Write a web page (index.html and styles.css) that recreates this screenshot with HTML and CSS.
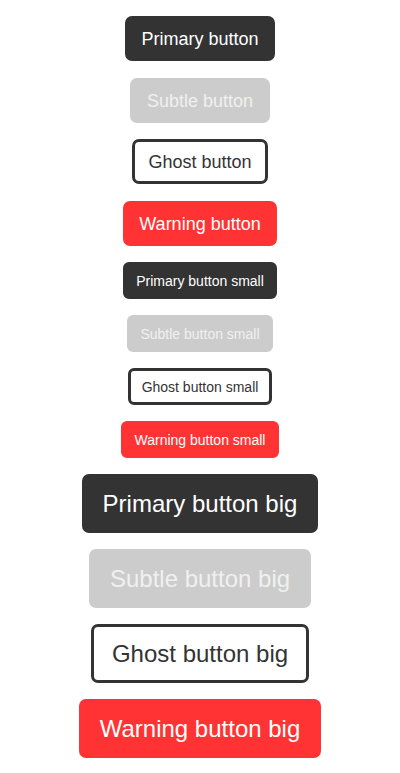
FILE: index.html
```html
<!DOCTYPE html>
<html lang="en">
<head>
<meta charset="utf-8">
<title>Buttons</title>
<link rel="stylesheet" href="styles.css">
</head>
<body>
<main class="stack">
  <button class="btn btn-primary">Primary button</button>
  <button class="btn btn-subtle">Subtle button</button>
  <button class="btn btn-ghost">Ghost button</button>
  <button class="btn btn-warning">Warning button</button>
  <button class="btn btn-small btn-primary">Primary button small</button>
  <button class="btn btn-small btn-subtle">Subtle button small</button>
  <button class="btn btn-small btn-ghost">Ghost button small</button>
  <button class="btn btn-small btn-warning">Warning button small</button>
  <button class="btn btn-big btn-primary">Primary button big</button>
  <button class="btn btn-big btn-subtle">Subtle button big</button>
  <button class="btn btn-big btn-ghost">Ghost button big</button>
  <button class="btn btn-big btn-warning">Warning button big</button>
</main>
</body>
</html>
```
FILE: styles.css
```css
html, body {
  margin: 0;
  padding: 0;
  background: #ffffff;
}

.stack {
  display: flex;
  flex-direction: column;
  align-items: center;
  gap: 16.5px;
  padding: 16px 0;
}

.btn {
  font-family: "Liberation Sans", Arial, sans-serif;
  font-size: 18px;
  line-height: 21px;
  padding: 10px 13.5px 8px;
  border: 3px solid transparent;
  border-radius: 7px;
  cursor: pointer;
  white-space: nowrap;
  margin: 0;
}

.btn-small {
  font-size: 14px;
  line-height: 16.5px;
  padding: 7.5px 10.5px 6.5px;
  border-radius: 6px;
}

.btn-big {
  font-size: 24px;
  line-height: 27.5px;
  padding: 13px 17.5px 12px;
  border-radius: 7px;
}

.btn-primary {
  background: #333333;
  border-color: #333333;
  color: #ffffff;
}

.btn-subtle {
  background: #cccccc;
  border-color: #cccccc;
  color: #f0f0f0;
}

.btn-ghost {
  background: #ffffff;
  border-color: #333333;
  color: #333333;
}

.btn-warning {
  background: #ff3333;
  border-color: #ff3333;
  color: #ffffff;
}
```
